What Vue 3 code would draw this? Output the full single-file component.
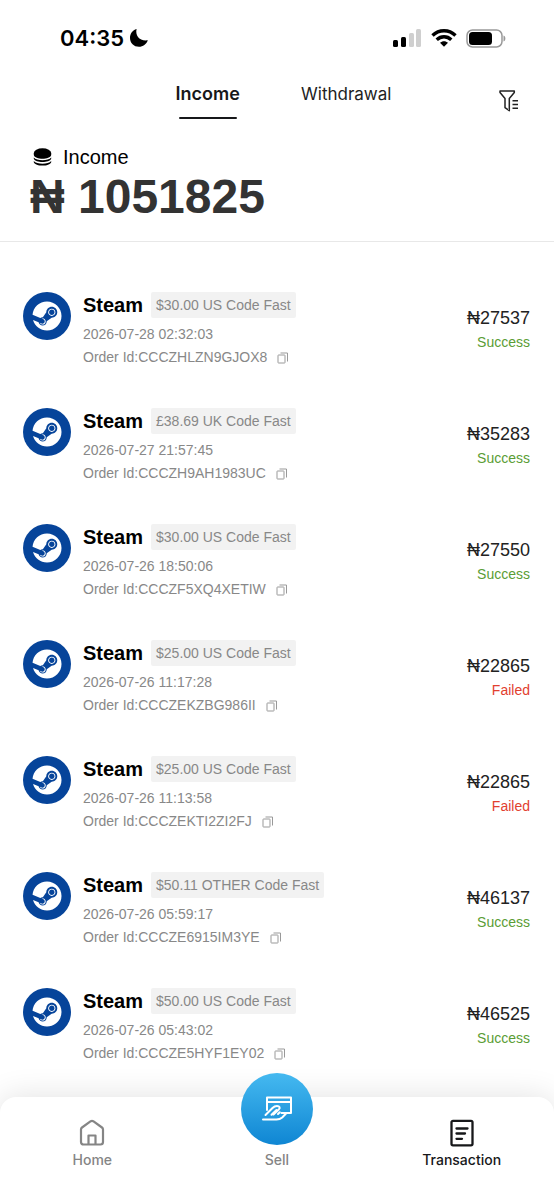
<script setup>
import { ref } from 'vue'

const tab = ref('Income')
const orders = [
  { tag: '$30.00 US Code Fast', time: '2026-07-28 02:32:03', id: 'CCCZHLZN9GJOX8', amount: 27537, status: 'Success' },
  { tag: '£38.69 UK Code Fast', time: '2026-07-27 21:57:45', id: 'CCCZH9AH1983UC', amount: 35283, status: 'Success' },
  { tag: '$30.00 US Code Fast', time: '2026-07-26 18:50:06', id: 'CCCZF5XQ4XETIW', amount: 27550, status: 'Success' },
  { tag: '$25.00 US Code Fast', time: '2026-07-26 11:17:28', id: 'CCCZEKZBG986II', amount: 22865, status: 'Failed' },
  { tag: '$25.00 US Code Fast', time: '2026-07-26 11:13:58', id: 'CCCZEKTI2ZI2FJ', amount: 22865, status: 'Failed' },
  { tag: '$50.11 OTHER Code Fast', time: '2026-07-26 05:59:17', id: 'CCCZE6915IM3YE', amount: 46137, status: 'Success' },
  { tag: '$50.00 US Code Fast', time: '2026-07-26 05:43:02', id: 'CCCZE5HYF1EY02', amount: 46525, status: 'Success' },
]
</script>

<template>
  <div class="app">
    <div class="status-bar">
      <div class="clock">
        <span>04:35</span>
        <svg width="20" height="20" viewBox="0 0 20 20" aria-hidden="true">
          <path d="M7.600 1C6 7.500 10.500 13.400 18.800 12.300C17.400 16.300 14 18.800 10 18.800C4.800 18.800 1 15 1 10C1 5.800 3.600 2.200 7.600 1Z" />
        </svg>
      </div>
      <div class="signals" aria-hidden="true">
        <svg width="29" height="18" viewBox="0 0 29 18">
          <rect x="0" y="11" width="5" height="7" rx="1.500" />
          <rect x="8" y="8" width="5" height="10" rx="1.500" />
          <rect x="16" y="4" width="5" height="14" rx="1.500" fill="#cfcfcf" />
          <rect x="23" y="0" width="5" height="18" rx="1.500" fill="#cfcfcf" />
        </svg>
        <svg width="26" height="18" viewBox="0 0 26 18">
          <g fill="none" stroke="#000" stroke-width="3.400">
            <path d="M1.500 6.500C8 0.200 18 0.200 24.500 6.500" />
            <path d="M5.700 10.700C10 6.700 16 6.700 20.300 10.700" />
          </g>
          <path d="M13 17.700L9 13.700C11.300 11.600 14.700 11.600 17 13.700Z" />
        </svg>
        <svg width="40" height="19" viewBox="0 0 40 19">
          <rect x="1" y="1" width="35" height="17" rx="5.500" fill="none" stroke="#999" stroke-width="1.500" />
          <rect x="3" y="3" width="23" height="13" rx="3.500" />
          <path d="M37.500 6.500C40 7 40 12 37.500 12.500Z" fill="#999" />
        </svg>
      </div>
    </div>

    <header class="tabs">
      <button
        v-for="name in ['Income', 'Withdrawal']"
        :key="name"
        type="button"
        class="tab"
        :class="{ active: tab === name }"
        @click="tab = name"
      >{{ name }}</button>
      <button type="button" class="filter" aria-label="Filter">
        <svg width="20" height="22" viewBox="0 0 20 22" fill="none" stroke="#222" stroke-width="1.500" stroke-linejoin="round">
          <path d="M1 1H15.300V2.500L10.300 8.500V20.700L6 17.700V8.500L1 2.500Z" />
          <path d="M13.500 10.800H19M13.500 14.500H19M13.500 18.200H19" />
        </svg>
      </button>
    </header>

    <section class="summary">
      <div class="summary-label">
        <svg width="19" height="18" viewBox="0 0 19 18" aria-hidden="true">
          <ellipse cx="9.500" cy="5" rx="8.700" ry="4.700" />
          <path d="M0.800 5V7C2 12 17 12 18.200 7V5Z" />
          <path d="M0.800 9.500C3.500 13.200 15.500 13.200 18.200 9.500V10.700C16.500 15 2.500 15 0.800 10.700Z" />
          <path d="M0.800 13C3.500 16.500 15.500 16.500 18.200 13V14.200C16.500 18.700 2.500 18.700 0.800 14.200Z" />
        </svg>
        <span>Income</span>
      </div>
      <div class="total">₦ 1051825</div>
    </section>

    <main>
      <ul class="orders">
        <li v-for="order in orders" :key="order.id" class="order">
          <svg class="logo" width="48" height="48" viewBox="0 0 48 48" role="img" aria-label="Steam">
            <circle cx="24" cy="24" r="24" fill="#06449a" />
            <path
              transform="translate(9.500 9.500) scale(1.210)"
              fill="#fff"
              d="M11.979 0C5.678 0 .511 4.860.022 11.037l6.432 2.658c.545-.371 1.203-.590 1.912-.590.063 0 .125.004.188.006l2.861-4.142V8.910c0-2.495 2.028-4.524 4.524-4.524 2.494 0 4.524 2.031 4.524 4.527s-2.030 4.525-4.524 4.525h-.105l-4.076 2.911c0 .052.004.105.004.159 0 1.875-1.515 3.396-3.390 3.396-1.635 0-3.016-1.173-3.331-2.727L.436 15.270C1.862 20.307 6.486 24 11.979 24c6.627 0 11.999-5.373 11.999-12S18.605 0 11.979 0zM7.540 18.210l-1.473-.610c.262.543.714.999 1.314 1.250 1.297.539 2.793-.076 3.332-1.375.263-.630.264-1.319.005-1.949s-.750-1.121-1.377-1.383c-.624-.260-1.290-.249-1.878-.030l1.523.630c.956.400 1.409 1.500 1.009 2.455-.397.957-1.497 1.410-2.454 1.012H7.540zm11.415-9.303c0-1.662-1.353-3.015-3.015-3.015-1.665 0-3.015 1.353-3.015 3.015 0 1.665 1.350 3.015 3.015 3.015 1.663 0 3.015-1.350 3.015-3.015zm-5.273-.005c0-1.252 1.013-2.266 2.265-2.266 1.249 0 2.266 1.014 2.266 2.266 0 1.251-1.017 2.265-2.266 2.265-1.253 0-2.265-1.014-2.265-2.265z"
            />
          </svg>
          <div class="info">
            <div class="heading">
              <span class="name">Steam</span>
              <span class="tag">{{ order.tag }}</span>
            </div>
            <div class="detail">{{ order.time }}</div>
            <div class="detail">
              <span>Order Id:{{ order.id }}</span>
              <button type="button" class="copy" :aria-label="'Copy order id ' + order.id">
                <svg width="12" height="12" viewBox="0 0 12 12" fill="none" stroke="#999" stroke-width="1">
                  <rect x="1" y="3" width="7" height="8" rx="0.500" />
                  <path d="M3.500 1H10.500V9.500" />
                </svg>
              </button>
            </div>
          </div>
          <div class="result">
            <div class="amount">₦{{ order.amount }}</div>
            <div class="state" :class="order.status.toLowerCase()">{{ order.status }}</div>
          </div>
        </li>
      </ul>
    </main>

    <nav class="nav">
      <a href="#home" class="nav-item">
        <svg width="28" height="28" viewBox="0 0 28 28" fill="none" stroke="#858585" stroke-width="2.200" stroke-linejoin="round">
          <path d="M3 10.500C3 9.500 3.300 9 4 8.500L12.800 2.200C13.600 1.700 14.400 1.700 15.200 2.200L24 8.500C24.700 9 25 9.500 25 10.500V23C25 24.700 24 25.500 22.500 25.500H5.500C4 25.500 3 24.700 3 23Z" />
          <path d="M10.500 25V16.500H17.500V25" />
        </svg>
        <span>Home</span>
      </a>
      <a href="#sell" class="nav-item">
        <span class="sell">
          <svg width="30" height="26" viewBox="0 0 30 26" fill="none" stroke="#fff" stroke-width="2" stroke-linejoin="round" stroke-linecap="round">
            <path d="M5 14V1.500H29V17H24.500" />
            <path d="M5 6H29" />
            <path d="M3.500 19L10.500 12C12 10.500 13.500 10 15 10C17.700 10 18.500 12 16.800 13.500L11.500 18.500M9.500 18.800L14.500 14M16 18L17.800 16.200" />
            <path d="M1 23.500H14.500C17 23.500 18.500 23 20.200 21.500L24.500 17H19.500" />
          </svg>
        </span>
        <span>Sell</span>
      </a>
      <a href="#transaction" class="nav-item current" aria-current="page">
        <svg width="28" height="28" viewBox="0 0 28 28" fill="none" stroke="#17181a" stroke-width="2.300" stroke-linejoin="round" stroke-linecap="round">
          <rect x="3.500" y="1.800" width="21" height="24.500" rx="1.500" />
          <path d="M8.500 9.500H19.500M8.500 14.500H17M8.500 19.800H14" />
        </svg>
        <span>Transaction</span>
      </a>
    </nav>
  </div>
</template>

<style>
body {
  margin: 0;
  background: #fff;
}
</style>

<style scoped>
.app {
  display: flex;
  flex-direction: column;
  min-height: 100vh;
  overflow: hidden;
  color: #000;
  font-family: "Liberation Sans", Arial, sans-serif;
}
button {
  padding: 0;
  border: 0;
  background: none;
  cursor: pointer;
}
svg {
  display: block;
  flex: none;
}
.status-bar {
  display: flex;
  align-items: center;
  justify-content: space-between;
  height: 76px;
  padding: 0 48px 0 60px;
}
.clock {
  display: flex;
  align-items: center;
  gap: 5px;
  font: 600 22px/28px Inter, sans-serif;
}
.signals {
  display: flex;
  align-items: center;
  gap: 9px;
}
.tabs {
  position: relative;
  display: grid;
  grid-template-columns: 25% 25%;
  justify-content: center;
  justify-items: center;
  align-items: start;
  height: 68px;
}
.tab {
  position: relative;
  height: 36px;
  color: #222;
  font: 400 17px/36px Inter, sans-serif;
}
.tab.active {
  color: #17181a;
  font-size: 18px;
  font-weight: 600;
}
.tab.active::after {
  position: absolute;
  right: 3px;
  bottom: -7px;
  left: 3px;
  height: 2px;
  border-radius: 1px;
  background: #17181a;
  content: "";
}
.filter {
  position: absolute;
  top: 14px;
  right: 35px;
}
.summary {
  padding: 0 30px 18px;
  border-bottom: 1px solid #e8e8e8;
}
.summary-label {
  display: flex;
  align-items: center;
  gap: 11px;
  padding-left: 3px;
  font-size: 20px;
  line-height: 26px;
}
.total {
  color: #333;
  font-size: 48px;
  font-weight: 700;
  line-height: 53px;
}
main {
  flex: 1;
}
.orders {
  display: flex;
  flex-direction: column;
  gap: 39px;
  margin: 0;
  padding: 50px 24px 28px 23px;
  list-style: none;
}
.order {
  display: flex;
  align-items: flex-start;
}
.info {
  flex: 1;
  min-width: 0;
  margin-left: 12px;
}
.heading {
  display: flex;
  align-items: center;
  gap: 8px;
  margin-bottom: 5px;
}
.name {
  font-size: 20px;
  font-weight: 700;
  line-height: 26px;
}
.tag {
  padding: 0 5px;
  border-radius: 2px;
  background: #f2f2f2;
  color: #888;
  font-size: 14px;
  line-height: 26px;
}
.detail {
  display: flex;
  align-items: center;
  gap: 10px;
  color: #888;
  font-size: 14px;
  line-height: 23px;
}
.result {
  padding-top: 14px;
  text-align: right;
}
.amount {
  color: #222;
  font-size: 18px;
  line-height: 24px;
}
.state {
  font-size: 14px;
  line-height: 24px;
}
.success {
  color: #5a9d35;
}
.failed {
  color: #e2402f;
}
.nav {
  display: grid;
  grid-template-columns: repeat(3, 1fr);
  align-items: start;
  height: 103px;
  border-radius: 16px 16px 0 0;
  background: #fff;
  box-shadow: 0 0 32px rgba(0, 0, 0, 0.12);
}
.nav-item {
  display: flex;
  flex-direction: column;
  align-items: center;
  justify-content: flex-end;
  gap: 3px;
  height: 73px;
  color: #858585;
  font: 500 14px/20px Inter, sans-serif;
  text-decoration: none;
}
.sell {
  display: flex;
  flex: none;
  align-items: center;
  justify-content: center;
  width: 72px;
  height: 72px;
  margin-bottom: 2px;
  border-radius: 50%;
  background: linear-gradient(#45b9f0, #0f86d3);
}
.current {
  color: #17181a;
}
</style>
